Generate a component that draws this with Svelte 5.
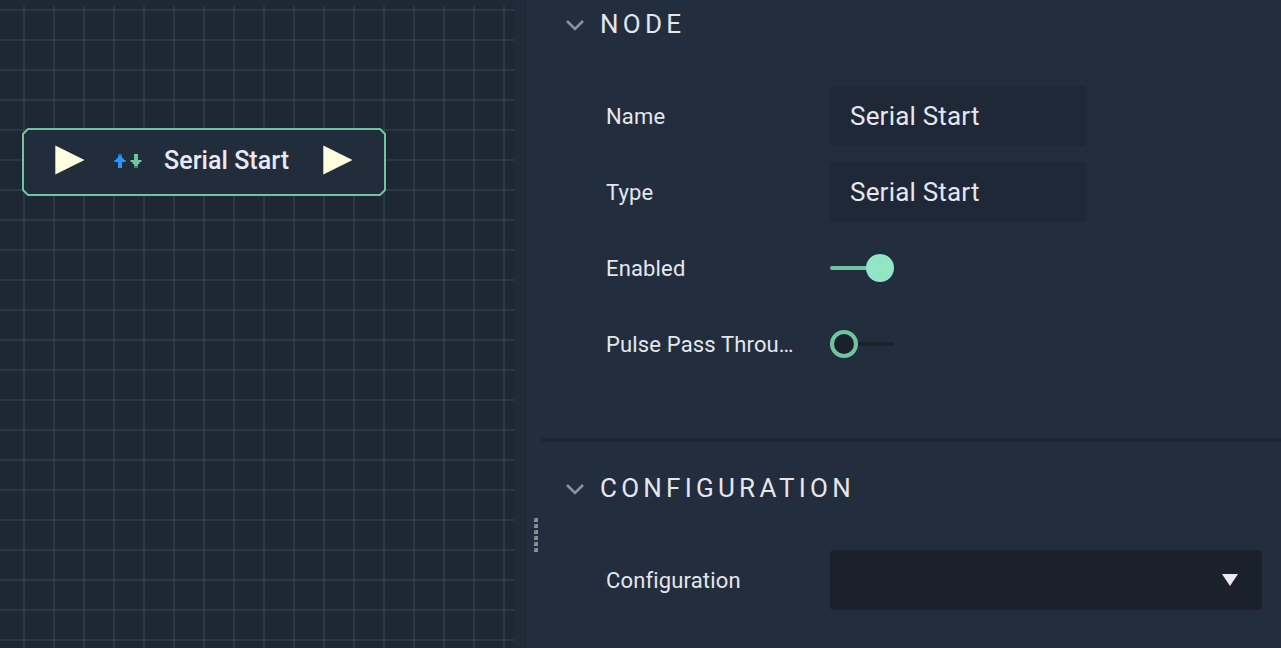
<script>
  let nodeOpen = $state(true);
  let configOpen = $state(true);
  let enabled = $state(true);
  let passThrough = $state(false);
  const fields = [
    { label: 'Name', value: 'Serial Start' },
    { label: 'Type', value: 'Serial Start' }
  ];
  const dots = Array.from({ length: 6 });
</script>

{#snippet chevron()}
  <svg class="chevron" width="18" height="12" viewBox="0 0 18 12">
    <path d="M1 1 L9 9 L17 1" />
  </svg>
{/snippet}

{#snippet port()}
  <svg class="port" width="30" height="30" viewBox="0 0 30 30">
    <path d="M0.3 0.5 L29.5 15 L0.3 29.5 Z" />
  </svg>
{/snippet}

{#snippet toggle(on)}
  <span class="toggle" class:on><i class="track"></i><i class="knob"></i></span>
{/snippet}

<main>
  <section class="canvas">
    <div class="grid"></div>
    <div class="node">
      <svg class="frame" width="364" height="68" viewBox="0 0 364 68">
        <path d="M6 1 H358 L363 6 V62 L358 67 H6 L1 62 V6 Z" />
      </svg>
      {@render port()}
      <svg class="arrows" width="28" height="16" viewBox="0 0 28 16" shape-rendering="crispEdges">
        <path fill="#226bae" d="M4 2h4v2H4z M2 6h8v2H2z M0 8h12v2H0z" />
        <path fill="#2497fd" d="M4 4h4v2h1v2h2v2H8v6H4v-6H1V8h2V6h1z" />
        <path fill="#47796f" d="M16 8h12v2H16z M18 10h8v2h-8z M20 14h4v2h-4z" />
        <path fill="#70c4a0" d="M20 2h4v6h3v2h-2v2h-1v2h-4v-2h-1v-2h-2V8h3z" />
      </svg>
      <span class="title">Serial Start</span>
      {@render port()}
    </div>
  </section>

  <div class="gutter"></div>

  <aside>
    <div class="handle">
      {#each dots as _}<i></i>{/each}
    </div>
    <div class="sections">
      <section class="group first">
        <button class="heading" onclick={() => (nodeOpen = !nodeOpen)}>
          {@render chevron()}<span>NODE</span>
        </button>
        {#if nodeOpen}
          <div class="rows">
            {#each fields as field}
              <div class="row">
                <span class="label">{field.label}</span>
                <div class="input">{field.value}</div>
              </div>
            {/each}
            <div class="row">
              <span class="label">Enabled</span>
              <button class="switch" aria-label="Enabled" onclick={() => (enabled = !enabled)}>{@render toggle(enabled)}</button>
            </div>
            <div class="row">
              <span class="label">Pulse Pass Throu…</span>
              <button class="switch" aria-label="Pulse pass through" onclick={() => (passThrough = !passThrough)}>{@render toggle(passThrough)}</button>
            </div>
          </div>
        {/if}
      </section>
      <section class="group">
        <button class="heading" onclick={() => (configOpen = !configOpen)}>
          {@render chevron()}<span>CONFIGURATION</span>
        </button>
        {#if configOpen}
          <div class="rows config">
            <div class="row">
              <span class="label">Configuration</span>
              <div class="select">
                <svg width="16" height="12" viewBox="0 0 16 12"><path d="M0 0H16L8 12Z" fill="#ebe8f0" /></svg>
              </div>
            </div>
          </div>
        {/if}
      </section>
    </div>
  </aside>
</main>

<style>
  :global(body) { margin: 0; background: #222d3d; }
  main {
    display: flex;
    width: 1281px;
    height: 648px;
    overflow: hidden;
    background: #222d3d;
    color: #e6e6ee;
    font-family: Roboto, sans-serif;
  }
  button { display: flex; padding: 0; border: 0; background: none; color: inherit; font: inherit; }
  .canvas { position: relative; box-sizing: border-box; width: 514px; padding-top: 6px; background: #1f2836; }
  .grid {
    height: 642px;
    background-color: #1e2835;
    background-image:
      linear-gradient(90deg, #6c8a9029 2px, transparent 2px),
      linear-gradient(#6c8a9029 2px, transparent 2px);
    background-size: 30px 30px;
    background-position: 23px 0, 0 3px;
  }
  .node {
    position: absolute;
    left: 22px;
    top: 128px;
    display: flex;
    align-items: center;
    box-sizing: border-box;
    width: 364px;
    height: 68px;
    padding: 0 33px 4px;
  }
  .frame { position: absolute; left: 0; top: 0; }
  .frame path { fill: #222d3c; stroke: #70c4a0; stroke-width: 2; }
  .port { position: relative; flex: none; }
  .port path { fill: #ffffdf; }
  .arrows { position: relative; flex: none; margin: 0 22px 0 29px; }
  .title {
    position: relative;
    flex: 1;
    padding-top: 2px;
    font-size: 25px;
    font-weight: 500;
    letter-spacing: 0.05px;
    line-height: 32px;
    white-space: nowrap;
    color: #e9e9f3;
  }
  .gutter { width: 12px; background: #202a39; }
  aside { display: flex; width: 755px; }
  .handle { display: flex; flex-direction: column; gap: 2px; width: 16px; padding: 518px 0 0 8px; box-sizing: border-box; }
  .handle i { width: 4px; height: 4px; background: linear-gradient(#777d87, #777d87) 0 0 / 2px 2px no-repeat, #8b8f98; }
  .sections { flex: 1; }
  .group { box-sizing: border-box; padding: 30px 19px 0 24px; }
  .first { height: 442px; padding-top: 8px; border-bottom: 4px solid #1d2733; }
  .heading { align-items: center; height: 32px; font-size: 26px; letter-spacing: 4.25px; line-height: 33px; }
  .chevron { margin: 3px 16px 0 0; }
  .chevron path { fill: none; stroke: #8c919b; stroke-width: 2.5; }
  .rows { display: flex; flex-direction: column; gap: 16px; padding: 46px 0 0 40px; }
  .row { display: flex; align-items: center; height: 60px; }
  .label { width: 224px; padding-top: 2px; font-size: 22px; letter-spacing: 0.15px; line-height: 30px; white-space: nowrap; }
  .input, .select { box-sizing: border-box; height: 60px; border-radius: 3px; }
  .input { width: 256px; padding: 0 20px; background: #1f2836; font-size: 26px; letter-spacing: 0.2px; line-height: 60px; }
  .select { display: flex; flex: 1; align-items: center; justify-content: flex-end; padding-right: 24px; border-radius: 4px; background: #1a212b; }
  .toggle { display: flex; align-items: center; flex-direction: row-reverse; width: 64px; height: 28px; }
  .toggle.on { flex-direction: row; }
  .track { flex: 1; height: 4px; border-radius: 0 2px 2px 0; background: #1a212b; }
  .knob { box-sizing: border-box; width: 28px; height: 28px; border: 4px solid #70c4a0; border-radius: 50%; background: #1a212b; }
  .on .track { border-radius: 2px 0 0 2px; background: #70c4a0; margin-right: -1px; }
  .on .knob { border-color: #93e6c5; background: #93e6c5; }
</style>
